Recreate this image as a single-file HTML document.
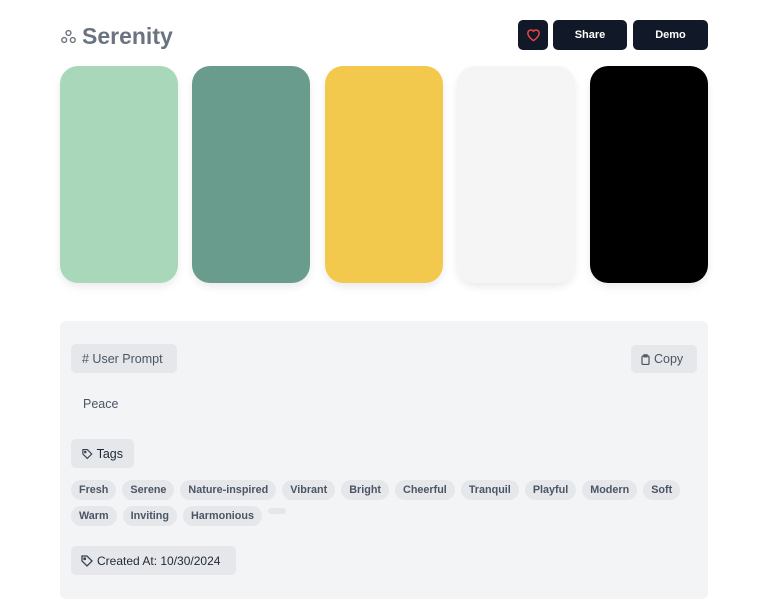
<!DOCTYPE html>
<html><head><meta charset="utf-8"><style>
*{box-sizing:border-box;margin:0;padding:0}
body{width:768px;height:609px;background:#fff;font-family:"Liberation Sans",sans-serif;position:relative;overflow:hidden}
.abs{position:absolute}
.title{left:60px;top:23px;font-size:23px;font-weight:bold;color:#6b7280;display:flex;align-items:center;gap:5px}
.btn{position:absolute;top:20px;height:30px;background:#111827;border-radius:5px;color:#fff;font-size:11px;font-weight:bold;display:flex;align-items:center;justify-content:center}
.sw{position:absolute;top:66px;width:118px;height:217px;border-radius:18px;box-shadow:0 4px 8px rgba(0,0,0,.08)}
.panel{left:60px;top:321px;width:648px;height:278px;background:#f3f4f6;border-radius:6px}
.chip{position:absolute;background:#e5e7eb;border-radius:5px;color:#4b5563;font-size:12.5px;display:flex;align-items:center;padding:0 11px;gap:4px;white-space:nowrap}
.tags{position:absolute;left:71px;top:480px;width:630px;display:flex;flex-wrap:wrap;gap:6px 6px}
.tag{background:#e5e7eb;border-radius:10px;height:20px;line-height:20px;padding:0 8px;font-size:10.8px;font-weight:bold;color:#4b5563;white-space:nowrap}
</style></head><body>
<div class="abs title"><svg width="17" height="17" viewBox="0 0 17 17" fill="none" stroke="#6b7280" stroke-width="1.4"><circle cx="8.5" cy="5" r="2.4"/><circle cx="4.2" cy="12" r="2.4"/><circle cx="12.8" cy="12" r="2.4"/></svg>Serenity</div>
<div class="btn" style="left:518px;width:30px"><svg width="15" height="14" viewBox="0 0 24 22" fill="none" stroke="#ef4444" stroke-width="2.4"><path d="M12 20s-9-5.5-9-12a5 5 0 0 1 9-3 5 5 0 0 1 9 3c0 6.5-9 12-9 12z"/></svg></div>
<div class="btn" style="left:553px;width:74px">Share</div>
<div class="btn" style="left:633px;width:75px">Demo</div>
<div class="sw" style="left:60px;background:#a8d8b9"></div>
<div class="sw" style="left:192px;background:#6a9c8e"></div>
<div class="sw" style="left:325px;background:#f2c94c"></div>
<div class="sw" style="left:457px;background:#f5f5f5"></div>
<div class="sw" style="left:590px;background:#000"></div>
<div class="abs panel"></div>
<div class="chip" style="left:71px;top:344px;height:29px;width:106px"># User Prompt</div>
<div class="chip" style="left:631px;top:345px;height:28px;width:66px;padding:0 10px"><svg width="9" height="11" viewBox="0 0 9 11" fill="none" stroke="#4b5563" stroke-width="1.2"><rect x="1" y="2" width="7" height="8.5" rx="1"/><rect x="3" y="0.8" width="3" height="2"/></svg>Copy</div>
<div class="abs" style="left:83px;top:397px;font-size:12.5px;color:#4b5563">Peace</div>
<div class="chip" style="left:71px;top:439px;height:29px;width:63px"><svg width="12" height="12" viewBox="0 0 12 12" fill="none" stroke="#374151" stroke-width="1.3"><path d="M1 1h5l5 5-5 5-5-5z"/><circle cx="3.7" cy="3.7" r=".8"/></svg><span style="color:#1f2937">Tags</span></div>
<div class="tags">
<span class="tag">Fresh</span><span class="tag">Serene</span><span class="tag">Nature-inspired</span><span class="tag">Vibrant</span><span class="tag">Bright</span><span class="tag">Cheerful</span><span class="tag">Tranquil</span><span class="tag">Playful</span><span class="tag">Modern</span><span class="tag">Soft</span>
<span class="tag">Warm</span><span class="tag">Inviting</span><span class="tag">Harmonious</span><span class="tag" style="height:6px;width:18px;padding:0;margin-top:2px"></span>
</div>
<div class="chip" style="left:71px;top:546px;height:29px;width:165px;padding:0 10px;font-size:12px"><svg width="12" height="12" viewBox="0 0 12 12" fill="none" stroke="#374151" stroke-width="1.3"><path d="M1 1h5l5 5-5 5-5-5z"/><circle cx="3.7" cy="3.7" r=".8"/></svg><span style="color:#1f2937">Created At: 10/30/2024</span></div>
</body></html>
